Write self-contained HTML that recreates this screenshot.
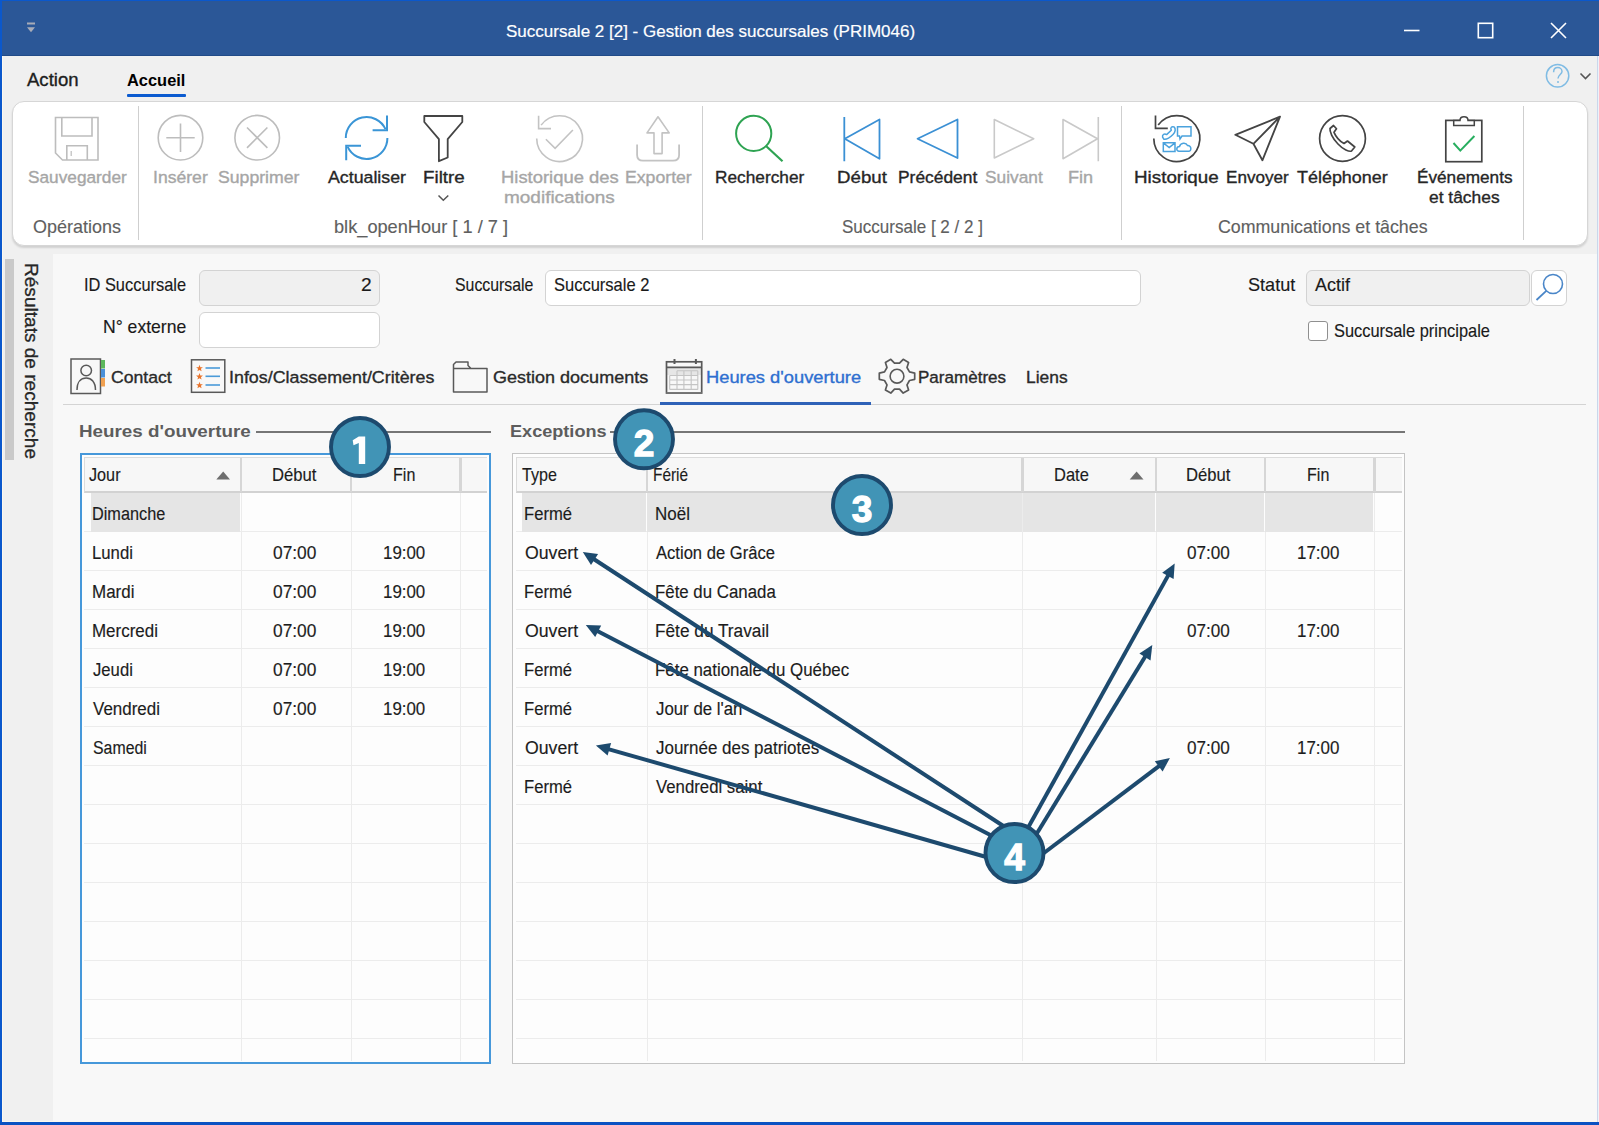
<!DOCTYPE html>
<html><head><meta charset="utf-8"><title>Gestion des succursales</title>
<style>html,body{margin:0;padding:0;width:1599px;height:1125px;overflow:hidden;position:relative;background:#f8f8f8;font-family:"Liberation Sans",sans-serif}</style>
</head><body>
<div style="position:absolute;left:0px;top:0px;width:1599px;height:1125px;z-index:0;background:#f8f8f8"></div><div style="position:absolute;left:2px;top:56px;width:1595px;height:198px;z-index:0;background:#f0f0f0"></div><div style="position:absolute;left:2px;top:254px;width:51px;height:869px;z-index:0;background:#f0f0f0"></div><div style="position:absolute;left:2px;top:56px;width:1px;height:1066px;z-index:1;background:#fbf8ef"></div><div style="position:absolute;left:2px;top:1121px;width:1595px;height:1px;z-index:1;background:#fbf8ef"></div><div style="position:absolute;left:2px;top:1px;width:1597px;height:55px;z-index:0;background:#2b5797"></div><div style="position:absolute;left:2px;top:55px;width:1597px;height:1px;z-index:0;background:#214b88"></div><div style="position:absolute;left:0px;top:0px;width:2px;height:1125px;z-index:5;background:#0b58cc"></div><div style="position:absolute;left:0px;top:0px;width:1599px;height:1px;z-index:5;background:#0b58cc"></div><div style="position:absolute;left:0px;top:1122px;width:1599px;height:3px;z-index:5;background:#0a52c2"></div><div style="position:absolute;left:1597px;top:56px;width:1px;height:1066px;z-index:5;background:#c9d7ec"></div><div style="position:absolute;left:1598px;top:56px;width:1px;height:1066px;z-index:5;background:#eef2f8"></div><div style="position:absolute;left:126.6px;top:93.6px;width:59.4px;height:3px;z-index:2;background:#0b5bd0;border-radius:1px"></div><div style="position:absolute;left:11.5px;top:101px;width:1576.5px;height:144.5px;z-index:1;background:#fff;border:1px solid #d6d6d6;border-radius:12px;box-sizing:border-box;box-shadow:0 2px 2px rgba(0,0,0,0.13)"></div><div style="position:absolute;left:138px;top:106px;width:1.3px;height:134px;z-index:2;background:#cfcfcf"></div><div style="position:absolute;left:702px;top:106px;width:1.3px;height:134px;z-index:2;background:#cfcfcf"></div><div style="position:absolute;left:1121px;top:106px;width:1.3px;height:134px;z-index:2;background:#cfcfcf"></div><div style="position:absolute;left:1523px;top:106px;width:1.3px;height:134px;z-index:2;background:#cfcfcf"></div><div style="position:absolute;left:5px;top:259px;width:9px;height:201px;z-index:2;background:#c9c9c9"></div><div style="position:absolute;left:41px;top:263px;z-index:3;transform-origin:0 0;transform:rotate(90deg) scaleX(1.072);font:17.8px/20.45px 'Liberation Sans',sans-serif;color:#262626;white-space:nowrap;-webkit-text-stroke:0.3px #262626">Résultats de recherche</div><div style="position:absolute;left:199px;top:270px;width:181px;height:36px;z-index:2;background:#f0f0f0;border:1.7px solid #d3d3d3;border-radius:6px;box-sizing:border-box"></div><div style="position:absolute;left:199px;top:312px;width:181px;height:36px;z-index:2;background:#fff;border:1.7px solid #d3d3d3;border-radius:6px;box-sizing:border-box"></div><div style="position:absolute;left:545px;top:270px;width:596px;height:36px;z-index:2;background:#fff;border:1.7px solid #d3d3d3;border-radius:6px;box-sizing:border-box"></div><div style="position:absolute;left:1306px;top:270px;width:224px;height:36px;z-index:2;background:#f0f0f0;border:1.7px solid #d3d3d3;border-radius:6px;box-sizing:border-box"></div><div style="position:absolute;left:1531px;top:270px;width:36px;height:36px;z-index:2;background:#fff;border:1.7px solid #d3d3d3;border-radius:6px;box-sizing:border-box"></div><div style="position:absolute;left:1308px;top:320.5px;width:20px;height:20px;z-index:2;background:#fff;border:1.3px solid #8f8f8f;border-radius:3px;box-sizing:border-box"></div><div style="position:absolute;left:63px;top:404px;width:1523px;height:1.3px;z-index:2;background:#d4d4d4"></div><div style="position:absolute;left:659.6px;top:402px;width:211px;height:3.2px;z-index:3;background:#2f62b8"></div><div style="position:absolute;left:256px;top:430.6px;width:235px;height:2px;z-index:2;background:#767676"></div><div style="position:absolute;left:610px;top:430.6px;width:795px;height:2px;z-index:2;background:#767676"></div><div style="position:absolute;left:80px;top:453px;width:411.2px;height:611px;z-index:2;background:#fdfdfd;border:2px solid #4698da;box-sizing:border-box"></div><div style="position:absolute;left:84px;top:457px;width:403.2px;height:36px;z-index:3;background:#f7f7f7;border-top:1px solid #dcdcdc;border-left:1px solid #dcdcdc;border-bottom:2px solid #d2d2d2;box-sizing:border-box"></div><div style="position:absolute;left:239.7px;top:458px;width:2.5px;height:34px;z-index:4;background:#d6d6d6"></div><div style="position:absolute;left:240.7px;top:493px;width:1px;height:568px;z-index:3;background:#ececec"></div><div style="position:absolute;left:349.5px;top:458px;width:2.5px;height:34px;z-index:4;background:#d6d6d6"></div><div style="position:absolute;left:350.5px;top:493px;width:1px;height:568px;z-index:3;background:#ececec"></div><div style="position:absolute;left:459.4px;top:458px;width:2.5px;height:34px;z-index:4;background:#d6d6d6"></div><div style="position:absolute;left:460.4px;top:493px;width:1px;height:568px;z-index:3;background:#ececec"></div><div style="position:absolute;left:84px;top:530.8px;width:403.2px;height:1.5px;z-index:3;background:#ececec"></div><div style="position:absolute;left:84px;top:569.8px;width:403.2px;height:1.5px;z-index:3;background:#ececec"></div><div style="position:absolute;left:84px;top:608.8px;width:403.2px;height:1.5px;z-index:3;background:#ececec"></div><div style="position:absolute;left:84px;top:647.8px;width:403.2px;height:1.5px;z-index:3;background:#ececec"></div><div style="position:absolute;left:84px;top:686.8px;width:403.2px;height:1.5px;z-index:3;background:#ececec"></div><div style="position:absolute;left:84px;top:725.8px;width:403.2px;height:1.5px;z-index:3;background:#ececec"></div><div style="position:absolute;left:84px;top:764.8px;width:403.2px;height:1.5px;z-index:3;background:#ececec"></div><div style="position:absolute;left:84px;top:803.8px;width:403.2px;height:1.5px;z-index:3;background:#ececec"></div><div style="position:absolute;left:84px;top:842.8px;width:403.2px;height:1.5px;z-index:3;background:#ececec"></div><div style="position:absolute;left:84px;top:881.8px;width:403.2px;height:1.5px;z-index:3;background:#ececec"></div><div style="position:absolute;left:84px;top:920.8px;width:403.2px;height:1.5px;z-index:3;background:#ececec"></div><div style="position:absolute;left:84px;top:959.8px;width:403.2px;height:1.5px;z-index:3;background:#ececec"></div><div style="position:absolute;left:84px;top:998.8px;width:403.2px;height:1.5px;z-index:3;background:#ececec"></div><div style="position:absolute;left:84px;top:1037.8px;width:403.2px;height:1.5px;z-index:3;background:#ececec"></div><div style="position:absolute;left:91.3px;top:493px;width:148.89999999999998px;height:38.5px;z-index:3;background:#e5e5e5"></div><div style="position:absolute;left:511.5px;top:453px;width:893.5px;height:611px;z-index:2;background:#fdfdfd;border:1.5px solid #c4c4c4;box-sizing:border-box"></div><div style="position:absolute;left:515.5px;top:457px;width:886.5px;height:36px;z-index:3;background:#f7f7f7;border-top:1px solid #dcdcdc;border-left:1px solid #dcdcdc;border-bottom:2px solid #d2d2d2;box-sizing:border-box"></div><div style="position:absolute;left:645.8px;top:458px;width:2.5px;height:34px;z-index:4;background:#d6d6d6"></div><div style="position:absolute;left:646.8px;top:493px;width:1px;height:568px;z-index:3;background:#ececec"></div><div style="position:absolute;left:1021.3px;top:458px;width:2.5px;height:34px;z-index:4;background:#d6d6d6"></div><div style="position:absolute;left:1022.3px;top:493px;width:1px;height:568px;z-index:3;background:#ececec"></div><div style="position:absolute;left:1154.5px;top:458px;width:2.5px;height:34px;z-index:4;background:#d6d6d6"></div><div style="position:absolute;left:1155.5px;top:493px;width:1px;height:568px;z-index:3;background:#ececec"></div><div style="position:absolute;left:1263.6px;top:458px;width:2.5px;height:34px;z-index:4;background:#d6d6d6"></div><div style="position:absolute;left:1264.6px;top:493px;width:1px;height:568px;z-index:3;background:#ececec"></div><div style="position:absolute;left:1373px;top:458px;width:2.5px;height:34px;z-index:4;background:#d6d6d6"></div><div style="position:absolute;left:1374px;top:493px;width:1px;height:568px;z-index:3;background:#ececec"></div><div style="position:absolute;left:515.5px;top:530.8px;width:886.5px;height:1.5px;z-index:3;background:#ececec"></div><div style="position:absolute;left:515.5px;top:569.8px;width:886.5px;height:1.5px;z-index:3;background:#ececec"></div><div style="position:absolute;left:515.5px;top:608.8px;width:886.5px;height:1.5px;z-index:3;background:#ececec"></div><div style="position:absolute;left:515.5px;top:647.8px;width:886.5px;height:1.5px;z-index:3;background:#ececec"></div><div style="position:absolute;left:515.5px;top:686.8px;width:886.5px;height:1.5px;z-index:3;background:#ececec"></div><div style="position:absolute;left:515.5px;top:725.8px;width:886.5px;height:1.5px;z-index:3;background:#ececec"></div><div style="position:absolute;left:515.5px;top:764.8px;width:886.5px;height:1.5px;z-index:3;background:#ececec"></div><div style="position:absolute;left:515.5px;top:803.8px;width:886.5px;height:1.5px;z-index:3;background:#ececec"></div><div style="position:absolute;left:515.5px;top:842.8px;width:886.5px;height:1.5px;z-index:3;background:#ececec"></div><div style="position:absolute;left:515.5px;top:881.8px;width:886.5px;height:1.5px;z-index:3;background:#ececec"></div><div style="position:absolute;left:515.5px;top:920.8px;width:886.5px;height:1.5px;z-index:3;background:#ececec"></div><div style="position:absolute;left:515.5px;top:959.8px;width:886.5px;height:1.5px;z-index:3;background:#ececec"></div><div style="position:absolute;left:515.5px;top:998.8px;width:886.5px;height:1.5px;z-index:3;background:#ececec"></div><div style="position:absolute;left:515.5px;top:1037.8px;width:886.5px;height:1.5px;z-index:3;background:#ececec"></div><div style="position:absolute;left:522px;top:493px;width:124.29999999999995px;height:38.5px;z-index:3;background:#e5e5e5"></div><div style="position:absolute;left:647.3px;top:493px;width:374.5px;height:38.5px;z-index:3;background:#e5e5e5"></div><div style="position:absolute;left:1022.8px;top:493px;width:132.20000000000005px;height:38.5px;z-index:3;background:#e5e5e5"></div><div style="position:absolute;left:1156px;top:493px;width:108.09999999999991px;height:38.5px;z-index:3;background:#e5e5e5"></div><div style="position:absolute;left:1265.1px;top:493px;width:108.40000000000009px;height:38.5px;z-index:3;background:#e5e5e5"></div>
<svg style="position:absolute;left:0;top:0;z-index:4" width="1599" height="1125" viewBox="0 0 1599 1125"><rect x="27" y="22.5" width="8" height="2" fill="#a8acb8"/><polygon points="27,27.3 35,27.3 31,32.3" fill="#a8acb8"/><line x1="1404" y1="30.5" x2="1419.5" y2="30.5" stroke="#fff" stroke-width="1.6"/><rect x="1478.3" y="23.3" width="14.4" height="14.4" fill="none" stroke="#fff" stroke-width="1.6"/><path d="M1551,23 L1566,38 M1566,23 L1551,38" stroke="#fff" stroke-width="1.6"/><circle cx="1557.6" cy="75.8" r="11.2" fill="none" stroke="#80bce4" stroke-width="1.5"/><path d="M1553.6,72.3 C1553.6,68.8 1556,67.6 1557.8,67.6 C1560.2,67.6 1562,69.3 1562,71.6 C1562,74.3 1558,75 1558,78.6" fill="none" stroke="#80bce4" stroke-width="1.5"/><circle cx="1558" cy="82" r="1" fill="#80bce4"/><path d="M1580.5,73.5 L1585.5,78.5 L1590.5,73.5" fill="none" stroke="#555" stroke-width="1.6"/><path d="M55.5,117.5 H98 V160 H62.5 L55.5,153 Z" fill="none" stroke="#bdbdbd" stroke-width="1.6"/><path d="M61.8,117.5 V136 H92 V117.5" fill="none" stroke="#bdbdbd" stroke-width="1.6"/><path d="M66.8,160 V145.7 H87.3 V160" fill="none" stroke="#bdbdbd" stroke-width="1.6"/><line x1="71.2" y1="151" x2="71.2" y2="156" stroke="#bdbdbd" stroke-width="1.2"/><circle cx="180.5" cy="137.7" r="22.3" fill="none" stroke="#bdbdbd" stroke-width="1.6"/><path d="M166.3,137.7 H194.7 M180.5,123.5 V151.9" stroke="#bdbdbd" stroke-width="1.6"/><circle cx="257.2" cy="137.7" r="22.3" fill="none" stroke="#bdbdbd" stroke-width="1.6"/><path d="M247,127.5 L267.4,147.9 M267.4,127.5 L247,147.9" stroke="#bdbdbd" stroke-width="1.6"/><path d="M345.8,138.0 A20.8,20.8 0 0 1 385.5,129.2" fill="none" stroke="#3a95d6" stroke-width="2"/><path d="M387,115.5 V130.3 H372.6" fill="none" stroke="#3a95d6" stroke-width="2"/><path d="M387.4,138.0 A20.8,20.8 0 0 1 347.7,146.8" fill="none" stroke="#3a95d6" stroke-width="2"/><path d="M346.2,160.3 V145.8 H361" fill="none" stroke="#3a95d6" stroke-width="2"/><path d="M424.3,116 H462.3 V122 L447.7,139.2 V157.5 L438.9,161.2 V139.2 L424.3,122 Z" fill="none" stroke="#444" stroke-width="1.8" stroke-linejoin="round"/><path d="M438.5,195.5 L443.3,200.3 L448.3,195.5" fill="none" stroke="#555" stroke-width="1.5"/><path d="M541.1,125.1 A22.9,22.9 0 1 1 536.7,138.6" fill="none" stroke="#c3c3c3" stroke-width="1.6"/><path d="M538.6,115.7 V128.6 H551" fill="none" stroke="#c3c3c3" stroke-width="1.6"/><path d="M545.9,139.3 L555.1,148.4 L572.9,130" fill="none" stroke="#c3c3c3" stroke-width="1.6"/><path d="M658,116.8 L669.2,132.9 H662.1 V153.6 H654 V132.9 H647 Z" fill="none" stroke="#c3c3c3" stroke-width="1.6" stroke-linejoin="round"/><path d="M637.1,144.4 V155 Q637.1,160.7 643,160.7 H673 Q679.1,160.7 679.1,155 V144.4" fill="none" stroke="#c3c3c3" stroke-width="1.8"/><circle cx="753.7" cy="133.4" r="17.6" fill="none" stroke="#2ea352" stroke-width="2"/><line x1="766" y1="146" x2="782.5" y2="161.3" stroke="#2ea352" stroke-width="2.2"/><path d="M844.3,117 V161.3 M879.5,119.5 L844.8,138.7 L879.5,158.7 Z" fill="none" stroke="#3b90d4" stroke-width="1.8" stroke-linejoin="round"/><path d="M957.5,119.5 L917.5,138.7 L957.5,158 Z" fill="none" stroke="#3b90d4" stroke-width="1.8" stroke-linejoin="round"/><path d="M994.3,119.5 L1033.7,138.7 L994.3,158 Z" fill="none" stroke="#c9c9c9" stroke-width="1.6" stroke-linejoin="round"/><path d="M1098.3,117 V161.3 M1063,119.5 L1097.5,138.7 L1063,158.7 Z" fill="none" stroke="#c9c9c9" stroke-width="1.6" stroke-linejoin="round"/><path d="M1158.2,125.0 A23,23 0 1 1 1153.8,138.5" fill="none" stroke="#444" stroke-width="1.7"/><path d="M1155.5,115.6 V128.4 H1167.8" fill="none" stroke="#444" stroke-width="1.7"/><path d="M1162.6,137.2 C1162,134.5 1164.5,133.2 1166.6,134.6 L1171.3,130.2 C1170,128 1171.5,126 1174,126.9 C1176,128.5 1175.5,132 1173,134.5 C1170,137.5 1166.5,139.8 1163.8,139.2 Z" fill="none" stroke="#4aa2dd" stroke-width="1.5" stroke-linejoin="round"/><path d="M1177.5,126.8 H1191 V136 H1182 L1180,139 L1179.5,136 H1177.5 Z" fill="none" stroke="#4aa2dd" stroke-width="1.5"/><path d="M1163.3,142.8 H1175 V151.5 H1163.3 Z M1163.3,142.8 L1169.2,147.5 L1175,142.8" fill="none" stroke="#4aa2dd" stroke-width="1.5"/><path d="M1179,151.3 C1176,151.3 1176,146.5 1179.5,146.5 C1180.5,142.5 1186,142 1187.5,145.5 C1191.5,145 1192,151.3 1188.5,151.3 Z" fill="none" stroke="#4aa2dd" stroke-width="1.5"/><path d="M1280,116.7 L1235.3,134.8 L1253.4,143.8 L1262.4,160.3 Z M1253.4,143.8 L1280,116.7" fill="none" stroke="#444" stroke-width="1.8" stroke-linejoin="round"/><circle cx="1342.5" cy="138.5" r="22.9" fill="none" stroke="#444" stroke-width="1.7"/><path d="M1333.5,125.5 L1336.5,128.8 L1334,132.3 C1336,137 1339.5,141 1344,143.5 L1347.5,141 L1354.8,147 L1351.5,151 C1349.5,152 1343,149.5 1338,144 C1332.5,138.5 1329.5,131.5 1330,128.5 Z" fill="none" stroke="#444" stroke-width="1.7" stroke-linejoin="round"/><rect x="1445.8" y="120.4" width="36" height="41.3" fill="none" stroke="#444" stroke-width="1.7"/><path d="M1453.7,120.4 V125.6 H1474.3 V120.4 H1468 C1468,115.5 1460,115.5 1460,120.4 Z" fill="#fff" stroke="#444" stroke-width="1.5"/><path d="M1453.5,143 L1460.3,150.6 L1474.4,136" fill="none" stroke="#27ae5f" stroke-width="2"/><circle cx="1553" cy="284" r="9.5" fill="none" stroke="#4a86c8" stroke-width="1.6"/><line x1="1546.3" y1="290.8" x2="1536.5" y2="300" stroke="#4a86c8" stroke-width="1.8"/><rect x="71" y="359" width="29.5" height="34.5" fill="none" stroke="#595959" stroke-width="1.5"/><rect x="101" y="360" width="4" height="8.5" fill="#5cb85c"/><rect x="101" y="369" width="4" height="8.5" fill="#4a90d9"/><rect x="101" y="378" width="4" height="8.5" fill="#f0a050"/><circle cx="86.2" cy="370.5" r="5.3" fill="none" stroke="#595959" stroke-width="1.5"/><path d="M77,390 C77,382 81,378 86.2,378 C91.4,378 95.5,382 95.5,390" fill="none" stroke="#595959" stroke-width="1.5"/><rect x="191.5" y="359.8" width="33.3" height="32.5" fill="none" stroke="#595959" stroke-width="1.5"/><polygon points="199.50,364.80 200.38,367.19 202.92,367.29 200.93,368.86 201.62,371.31 199.50,369.90 197.38,371.31 198.07,368.86 196.08,367.29 198.62,367.19" fill="#e8742c"/><line x1="205.5" y1="368" x2="220" y2="368" stroke="#4a9ad8" stroke-width="1.6"/><polygon points="199.50,373.10 200.38,375.49 202.92,375.59 200.93,377.16 201.62,379.61 199.50,378.20 197.38,379.61 198.07,377.16 196.08,375.59 198.62,375.49" fill="#e8742c"/><line x1="205.5" y1="376.3" x2="220" y2="376.3" stroke="#4a9ad8" stroke-width="1.6"/><polygon points="199.50,381.80 200.38,384.19 202.92,384.29 200.93,385.86 201.62,388.31 199.50,386.90 197.38,388.31 198.07,385.86 196.08,384.29 198.62,384.19" fill="#e8742c"/><line x1="205.5" y1="385" x2="220" y2="385" stroke="#4a9ad8" stroke-width="1.6"/><path d="M453.5,366 V392 H487 V368.5 H471 L468,365.5 V362 H456 L453.5,364.5 Z M453.5,368.5 H487" fill="none" stroke="#595959" stroke-width="1.5" stroke-linejoin="round"/><rect x="666.8" y="367" width="34.6" height="8" fill="#e6e6e6"/><rect x="666.5" y="361.8" width="35.2" height="31.2" fill="none" stroke="#595959" stroke-width="1.7"/><line x1="666.5" y1="367.4" x2="701.7" y2="367.4" stroke="#595959" stroke-width="1.7"/><line x1="666.5" y1="392.6" x2="701.7" y2="392.6" stroke="#777" stroke-width="1.2"/><path d="M674.5,359 V364 M695.9,359 V364" stroke="#595959" stroke-width="2"/><path d="M677,370.7 H697.8 M669.7,375.5 H697.8 M669.7,380 H697.8 M669.7,384.6 H697.8 M669.7,389.4 H697.8 M669.7,375.5 V389.4 M677,370.7 V389.4 M683.9,370.7 V389.4 M691.2,370.7 V389.4 M697.8,370.7 V389.4" fill="none" stroke="#c4c4c4" stroke-width="1.1"/><path d="M909.5,371.9 L914.7,373.1 L914.7,379.3 L909.5,380.5 L907.0,384.9 L908.6,390.0 L903.2,393.1 L899.5,389.2 L894.5,389.2 L890.8,393.1 L885.4,390.0 L887.0,384.9 L884.5,380.5 L879.3,379.3 L879.3,373.1 L884.5,371.9 L887.0,367.5 L885.4,362.4 L890.8,359.3 L894.5,363.2 L899.5,363.2 L903.2,359.3 L908.6,362.4 L907.0,367.5 Z" fill="none" stroke="#595959" stroke-width="1.7" stroke-linejoin="round"/><circle cx="897" cy="376.2" r="6.9" fill="none" stroke="#595959" stroke-width="1.6"/><polygon points="216.3,479.4 230,479.4 223.2,471.5" fill="#6e6e6e"/><polygon points="1129.7,479.4 1143.5,479.4 1136.6,471.5" fill="#6e6e6e"/></svg>
<div style="position:absolute;left:506.00px;top:21.62px;z-index:6;font:normal 17px/19.53px 'Liberation Sans',sans-serif;color:#ffffff;white-space:pre;-webkit-text-stroke:0.2px #ffffff;">Succursale 2 [2] - Gestion des succursales (PRIM046)</div><div style="position:absolute;left:27.00px;top:70.19px;z-index:6;font:normal 17.8px/20.45px 'Liberation Sans',sans-serif;color:#1e1e1e;white-space:pre;-webkit-text-stroke:0.35px #1e1e1e;transform:scaleX(1.0426);transform-origin:0 0;">Action</div><div style="position:absolute;left:126.60px;top:70.45px;z-index:6;font:bold 17.4px/19.99px 'Liberation Sans',sans-serif;color:#000;white-space:pre;-webkit-text-stroke:0px #000;transform:scaleX(0.9438);transform-origin:0 0;">Accueil</div><div style="position:absolute;left:28.00px;top:168.33px;z-index:6;font:normal 17.2px/19.76px 'Liberation Sans',sans-serif;color:#a6a6a6;white-space:pre;-webkit-text-stroke:0.35px #a6a6a6;transform:scaleX(1.0031);transform-origin:0 0;">Sauvegarder</div><div style="position:absolute;left:152.98px;top:168.33px;z-index:6;font:normal 17.2px/19.76px 'Liberation Sans',sans-serif;color:#a6a6a6;white-space:pre;-webkit-text-stroke:0.35px #a6a6a6;transform:scaleX(1.0233);transform-origin:0 0;">Insérer</div><div style="position:absolute;left:218.30px;top:168.33px;z-index:6;font:normal 17.2px/19.76px 'Liberation Sans',sans-serif;color:#a6a6a6;white-space:pre;-webkit-text-stroke:0.35px #a6a6a6;transform:scaleX(1.0269);transform-origin:0 0;">Supprimer</div><div style="position:absolute;left:328.30px;top:168.33px;z-index:6;font:normal 17.2px/19.76px 'Liberation Sans',sans-serif;color:#262626;white-space:pre;-webkit-text-stroke:0.35px #262626;transform:scaleX(1.0325);transform-origin:0 0;">Actualiser</div><div style="position:absolute;left:422.91px;top:168.33px;z-index:6;font:normal 17.2px/19.76px 'Liberation Sans',sans-serif;color:#262626;white-space:pre;-webkit-text-stroke:0.35px #262626;transform:scaleX(1.0919);transform-origin:0 0;">Filtre</div><div style="position:absolute;left:500.93px;top:168.33px;z-index:6;font:normal 17.2px/19.76px 'Liberation Sans',sans-serif;color:#a6a6a6;white-space:pre;-webkit-text-stroke:0.35px #a6a6a6;transform:scaleX(1.0714);transform-origin:0 0;">Historique des</div><div style="position:absolute;left:624.97px;top:168.33px;z-index:6;font:normal 17.2px/19.76px 'Liberation Sans',sans-serif;color:#a6a6a6;white-space:pre;-webkit-text-stroke:0.35px #a6a6a6;transform:scaleX(1.0275);transform-origin:0 0;">Exporter</div><div style="position:absolute;left:715.00px;top:168.33px;z-index:6;font:normal 17.2px/19.76px 'Liberation Sans',sans-serif;color:#262626;white-space:pre;-webkit-text-stroke:0.35px #262626;transform:scaleX(1.0043);transform-origin:0 0;">Rechercher</div><div style="position:absolute;left:836.91px;top:168.33px;z-index:6;font:normal 17.2px/19.76px 'Liberation Sans',sans-serif;color:#262626;white-space:pre;-webkit-text-stroke:0.35px #262626;transform:scaleX(1.0867);transform-origin:0 0;">Début</div><div style="position:absolute;left:897.99px;top:168.33px;z-index:6;font:normal 17.2px/19.76px 'Liberation Sans',sans-serif;color:#262626;white-space:pre;-webkit-text-stroke:0.35px #262626;transform:scaleX(1.0119);transform-origin:0 0;">Précédent</div><div style="position:absolute;left:985.00px;top:168.33px;z-index:6;font:normal 17.2px/19.76px 'Liberation Sans',sans-serif;color:#a6a6a6;white-space:pre;-webkit-text-stroke:0.35px #a6a6a6;transform:scaleX(1.0078);transform-origin:0 0;">Suivant</div><div style="position:absolute;left:1068.45px;top:168.33px;z-index:6;font:normal 17.2px/19.76px 'Liberation Sans',sans-serif;color:#a6a6a6;white-space:pre;-webkit-text-stroke:0.35px #a6a6a6;transform:scaleX(1.0530);transform-origin:0 0;">Fin</div><div style="position:absolute;left:1133.91px;top:168.33px;z-index:6;font:normal 17.2px/19.76px 'Liberation Sans',sans-serif;color:#262626;white-space:pre;-webkit-text-stroke:0.35px #262626;transform:scaleX(1.0947);transform-origin:0 0;">Historique</div><div style="position:absolute;left:1226.01px;top:168.33px;z-index:6;font:normal 17.2px/19.76px 'Liberation Sans',sans-serif;color:#262626;white-space:pre;-webkit-text-stroke:0.35px #262626;transform:scaleX(0.9947);transform-origin:0 0;">Envoyer</div><div style="position:absolute;left:1297.00px;top:168.33px;z-index:6;font:normal 17.2px/19.76px 'Liberation Sans',sans-serif;color:#262626;white-space:pre;-webkit-text-stroke:0.35px #262626;transform:scaleX(1.0432);transform-origin:0 0;">Téléphoner</div><div style="position:absolute;left:1417.00px;top:168.33px;z-index:6;font:normal 17.2px/19.76px 'Liberation Sans',sans-serif;color:#262626;white-space:pre;-webkit-text-stroke:0.35px #262626;">Événements</div><div style="position:absolute;left:503.90px;top:188.33px;z-index:6;font:normal 17.2px/19.76px 'Liberation Sans',sans-serif;color:#a6a6a6;white-space:pre;-webkit-text-stroke:0.35px #a6a6a6;transform:scaleX(1.1042);transform-origin:0 0;">modifications</div><div style="position:absolute;left:1429.00px;top:188.33px;z-index:6;font:normal 17.2px/19.76px 'Liberation Sans',sans-serif;color:#262626;white-space:pre;-webkit-text-stroke:0.35px #262626;transform:scaleX(1.0122);transform-origin:0 0;">et tâches</div><div style="position:absolute;left:33.00px;top:216.69px;z-index:6;font:normal 17.8px/20.45px 'Liberation Sans',sans-serif;color:#5f5f5f;white-space:pre;-webkit-text-stroke:0.15px #5f5f5f;transform:scaleX(1.0105);transform-origin:0 0;">Opérations</div><div style="position:absolute;left:333.98px;top:216.69px;z-index:6;font:normal 17.8px/20.45px 'Liberation Sans',sans-serif;color:#5f5f5f;white-space:pre;-webkit-text-stroke:0.15px #5f5f5f;transform:scaleX(1.0233);transform-origin:0 0;">blk_openHour [ 1 / 7 ]</div><div style="position:absolute;left:841.75px;top:216.69px;z-index:6;font:normal 17.8px/20.45px 'Liberation Sans',sans-serif;color:#5f5f5f;white-space:pre;-webkit-text-stroke:0.15px #5f5f5f;transform:scaleX(0.9568);transform-origin:0 0;">Succursale [ 2 / 2 ]</div><div style="position:absolute;left:1218.00px;top:216.69px;z-index:6;font:normal 17.8px/20.45px 'Liberation Sans',sans-serif;color:#5f5f5f;white-space:pre;-webkit-text-stroke:0.15px #5f5f5f;">Communications et tâches</div><div style="position:absolute;left:84.48px;top:274.59px;z-index:6;font:normal 17.8px/20.45px 'Liberation Sans',sans-serif;color:#1a1a1a;white-space:pre;-webkit-text-stroke:0.15px #1a1a1a;transform:scaleX(0.9217);transform-origin:0 0;">ID Succursale</div><div style="position:absolute;left:103.21px;top:316.59px;z-index:6;font:normal 17.8px/20.45px 'Liberation Sans',sans-serif;color:#1a1a1a;white-space:pre;-webkit-text-stroke:0.15px #1a1a1a;transform:scaleX(0.9891);transform-origin:0 0;">N° externe</div><div style="position:absolute;left:361.00px;top:274.59px;z-index:6;font:normal 17.8px/20.45px 'Liberation Sans',sans-serif;color:#1a1a1a;white-space:pre;-webkit-text-stroke:0.15px #1a1a1a;transform:scaleX(1.0778);transform-origin:0 0;">2</div><div style="position:absolute;left:454.50px;top:274.59px;z-index:6;font:normal 17.8px/20.45px 'Liberation Sans',sans-serif;color:#1a1a1a;white-space:pre;-webkit-text-stroke:0.15px #1a1a1a;transform:scaleX(0.8913);transform-origin:0 0;">Succursale</div><div style="position:absolute;left:553.50px;top:275.39px;z-index:6;font:normal 17.8px/20.45px 'Liberation Sans',sans-serif;color:#1a1a1a;white-space:pre;-webkit-text-stroke:0.15px #1a1a1a;transform:scaleX(0.9274);transform-origin:0 0;">Succursale 2</div><div style="position:absolute;left:1247.60px;top:274.59px;z-index:6;font:normal 17.8px/20.45px 'Liberation Sans',sans-serif;color:#1a1a1a;white-space:pre;-webkit-text-stroke:0.15px #1a1a1a;transform:scaleX(1.0189);transform-origin:0 0;">Statut</div><div style="position:absolute;left:1315.00px;top:275.39px;z-index:6;font:normal 17.8px/20.45px 'Liberation Sans',sans-serif;color:#1a1a1a;white-space:pre;-webkit-text-stroke:0.15px #1a1a1a;transform:scaleX(1.0104);transform-origin:0 0;">Actif</div><div style="position:absolute;left:1333.50px;top:320.89px;z-index:6;font:normal 17.8px/20.45px 'Liberation Sans',sans-serif;color:#1a1a1a;white-space:pre;-webkit-text-stroke:0.15px #1a1a1a;transform:scaleX(0.9224);transform-origin:0 0;">Succursale principale</div><div style="position:absolute;left:110.75px;top:368.12px;z-index:6;font:normal 17.1px/19.65px 'Liberation Sans',sans-serif;color:#2a2a2a;white-space:pre;-webkit-text-stroke:0.35px #2a2a2a;transform:scaleX(1.0311);transform-origin:0 0;">Contact</div><div style="position:absolute;left:228.96px;top:368.12px;z-index:6;font:normal 17.1px/19.65px 'Liberation Sans',sans-serif;color:#2a2a2a;white-space:pre;-webkit-text-stroke:0.35px #2a2a2a;transform:scaleX(1.0443);transform-origin:0 0;">Infos/Classement/Critères</div><div style="position:absolute;left:493.00px;top:368.12px;z-index:6;font:normal 17.1px/19.65px 'Liberation Sans',sans-serif;color:#2a2a2a;white-space:pre;-webkit-text-stroke:0.35px #2a2a2a;transform:scaleX(1.0536);transform-origin:0 0;">Gestion documents</div><div style="position:absolute;left:706.43px;top:368.12px;z-index:6;font:normal 17.1px/19.65px 'Liberation Sans',sans-serif;color:#2e6fd0;white-space:pre;-webkit-text-stroke:0.35px #2e6fd0;transform:scaleX(1.0709);transform-origin:0 0;">Heures d&#x27;ouverture</div><div style="position:absolute;left:918.00px;top:368.12px;z-index:6;font:normal 17.1px/19.65px 'Liberation Sans',sans-serif;color:#2a2a2a;white-space:pre;-webkit-text-stroke:0.35px #2a2a2a;transform:scaleX(0.9965);transform-origin:0 0;">Paramètres</div><div style="position:absolute;left:1025.98px;top:368.12px;z-index:6;font:normal 17.1px/19.65px 'Liberation Sans',sans-serif;color:#2a2a2a;white-space:pre;-webkit-text-stroke:0.35px #2a2a2a;transform:scaleX(1.0173);transform-origin:0 0;">Liens</div><div style="position:absolute;left:79.16px;top:421.84px;z-index:6;font:bold 17.3px/19.88px 'Liberation Sans',sans-serif;color:#5d5d5d;white-space:pre;-webkit-text-stroke:0px #5d5d5d;transform:scaleX(1.0881);transform-origin:0 0;">Heures d&#x27;ouverture</div><div style="position:absolute;left:510.45px;top:421.84px;z-index:6;font:bold 17.3px/19.88px 'Liberation Sans',sans-serif;color:#5d5d5d;white-space:pre;-webkit-text-stroke:0px #5d5d5d;transform:scaleX(1.0476);transform-origin:0 0;">Exceptions</div><div style="position:absolute;left:89.40px;top:465.39px;z-index:6;font:normal 17.8px/20.45px 'Liberation Sans',sans-serif;color:#1c1c1c;white-space:pre;-webkit-text-stroke:0.15px #1c1c1c;transform:scaleX(0.9115);transform-origin:0 0;">Jour</div><div style="position:absolute;left:271.56px;top:465.39px;z-index:6;font:normal 17.8px/20.45px 'Liberation Sans',sans-serif;color:#1c1c1c;white-space:pre;-webkit-text-stroke:0.15px #1c1c1c;transform:scaleX(0.9353);transform-origin:0 0;">Début</div><div style="position:absolute;left:393.10px;top:465.39px;z-index:6;font:normal 17.8px/20.45px 'Liberation Sans',sans-serif;color:#1c1c1c;white-space:pre;-webkit-text-stroke:0.15px #1c1c1c;transform:scaleX(0.9030);transform-origin:0 0;">Fin</div><div style="position:absolute;left:522.00px;top:465.39px;z-index:6;font:normal 17.8px/20.45px 'Liberation Sans',sans-serif;color:#1c1c1c;white-space:pre;-webkit-text-stroke:0.15px #1c1c1c;transform:scaleX(0.9053);transform-origin:0 0;">Type</div><div style="position:absolute;left:652.89px;top:465.39px;z-index:6;font:normal 17.8px/20.45px 'Liberation Sans',sans-serif;color:#1c1c1c;white-space:pre;-webkit-text-stroke:0.15px #1c1c1c;transform:scaleX(0.8644);transform-origin:0 0;">Férié</div><div style="position:absolute;left:1054.07px;top:465.39px;z-index:6;font:normal 17.8px/20.45px 'Liberation Sans',sans-serif;color:#1c1c1c;white-space:pre;-webkit-text-stroke:0.15px #1c1c1c;transform:scaleX(0.9272);transform-origin:0 0;">Date</div><div style="position:absolute;left:1185.56px;top:465.39px;z-index:6;font:normal 17.8px/20.45px 'Liberation Sans',sans-serif;color:#1c1c1c;white-space:pre;-webkit-text-stroke:0.15px #1c1c1c;transform:scaleX(0.9353);transform-origin:0 0;">Début</div><div style="position:absolute;left:1307.10px;top:465.39px;z-index:6;font:normal 17.8px/20.45px 'Liberation Sans',sans-serif;color:#1c1c1c;white-space:pre;-webkit-text-stroke:0.15px #1c1c1c;transform:scaleX(0.9030);transform-origin:0 0;">Fin</div><div style="position:absolute;left:92.28px;top:503.67px;z-index:6;font:normal 17.6px/20.22px 'Liberation Sans',sans-serif;color:#1c1c1c;white-space:pre;-webkit-text-stroke:0.15px #1c1c1c;transform:scaleX(0.9248);transform-origin:0 0;">Dimanche</div><div style="position:absolute;left:92.25px;top:542.67px;z-index:6;font:normal 17.6px/20.22px 'Liberation Sans',sans-serif;color:#1c1c1c;white-space:pre;-webkit-text-stroke:0.15px #1c1c1c;transform:scaleX(0.9504);transform-origin:0 0;">Lundi</div><div style="position:absolute;left:272.90px;top:542.67px;z-index:6;font:normal 17.6px/20.22px 'Liberation Sans',sans-serif;color:#1c1c1c;white-space:pre;-webkit-text-stroke:0.15px #1c1c1c;transform:scaleX(0.9855);transform-origin:0 0;">07:00</div><div style="position:absolute;left:383.44px;top:542.67px;z-index:6;font:normal 17.6px/20.22px 'Liberation Sans',sans-serif;color:#1c1c1c;white-space:pre;-webkit-text-stroke:0.15px #1c1c1c;transform:scaleX(0.9597);transform-origin:0 0;">19:00</div><div style="position:absolute;left:92.24px;top:581.67px;z-index:6;font:normal 17.6px/20.22px 'Liberation Sans',sans-serif;color:#1c1c1c;white-space:pre;-webkit-text-stroke:0.15px #1c1c1c;transform:scaleX(0.9647);transform-origin:0 0;">Mardi</div><div style="position:absolute;left:272.90px;top:581.67px;z-index:6;font:normal 17.6px/20.22px 'Liberation Sans',sans-serif;color:#1c1c1c;white-space:pre;-webkit-text-stroke:0.15px #1c1c1c;transform:scaleX(0.9855);transform-origin:0 0;">07:00</div><div style="position:absolute;left:383.44px;top:581.67px;z-index:6;font:normal 17.6px/20.22px 'Liberation Sans',sans-serif;color:#1c1c1c;white-space:pre;-webkit-text-stroke:0.15px #1c1c1c;transform:scaleX(0.9597);transform-origin:0 0;">19:00</div><div style="position:absolute;left:92.24px;top:620.67px;z-index:6;font:normal 17.6px/20.22px 'Liberation Sans',sans-serif;color:#1c1c1c;white-space:pre;-webkit-text-stroke:0.15px #1c1c1c;transform:scaleX(0.9636);transform-origin:0 0;">Mercredi</div><div style="position:absolute;left:272.90px;top:620.67px;z-index:6;font:normal 17.6px/20.22px 'Liberation Sans',sans-serif;color:#1c1c1c;white-space:pre;-webkit-text-stroke:0.15px #1c1c1c;transform:scaleX(0.9855);transform-origin:0 0;">07:00</div><div style="position:absolute;left:383.44px;top:620.67px;z-index:6;font:normal 17.6px/20.22px 'Liberation Sans',sans-serif;color:#1c1c1c;white-space:pre;-webkit-text-stroke:0.15px #1c1c1c;transform:scaleX(0.9597);transform-origin:0 0;">19:00</div><div style="position:absolute;left:93.20px;top:659.67px;z-index:6;font:normal 17.6px/20.22px 'Liberation Sans',sans-serif;color:#1c1c1c;white-space:pre;-webkit-text-stroke:0.15px #1c1c1c;transform:scaleX(0.9477);transform-origin:0 0;">Jeudi</div><div style="position:absolute;left:272.90px;top:659.67px;z-index:6;font:normal 17.6px/20.22px 'Liberation Sans',sans-serif;color:#1c1c1c;white-space:pre;-webkit-text-stroke:0.15px #1c1c1c;transform:scaleX(0.9855);transform-origin:0 0;">07:00</div><div style="position:absolute;left:383.44px;top:659.67px;z-index:6;font:normal 17.6px/20.22px 'Liberation Sans',sans-serif;color:#1c1c1c;white-space:pre;-webkit-text-stroke:0.15px #1c1c1c;transform:scaleX(0.9597);transform-origin:0 0;">19:00</div><div style="position:absolute;left:93.20px;top:698.67px;z-index:6;font:normal 17.6px/20.22px 'Liberation Sans',sans-serif;color:#1c1c1c;white-space:pre;-webkit-text-stroke:0.15px #1c1c1c;transform:scaleX(0.9643);transform-origin:0 0;">Vendredi</div><div style="position:absolute;left:272.90px;top:698.67px;z-index:6;font:normal 17.6px/20.22px 'Liberation Sans',sans-serif;color:#1c1c1c;white-space:pre;-webkit-text-stroke:0.15px #1c1c1c;transform:scaleX(0.9855);transform-origin:0 0;">07:00</div><div style="position:absolute;left:383.44px;top:698.67px;z-index:6;font:normal 17.6px/20.22px 'Liberation Sans',sans-serif;color:#1c1c1c;white-space:pre;-webkit-text-stroke:0.15px #1c1c1c;transform:scaleX(0.9597);transform-origin:0 0;">19:00</div><div style="position:absolute;left:93.20px;top:737.67px;z-index:6;font:normal 17.6px/20.22px 'Liberation Sans',sans-serif;color:#1c1c1c;white-space:pre;-webkit-text-stroke:0.15px #1c1c1c;transform:scaleX(0.9022);transform-origin:0 0;">Samedi</div><div style="position:absolute;left:523.56px;top:503.67px;z-index:6;font:normal 17.6px/20.22px 'Liberation Sans',sans-serif;color:#1c1c1c;white-space:pre;-webkit-text-stroke:0.15px #1c1c1c;transform:scaleX(0.9440);transform-origin:0 0;">Fermé</div><div style="position:absolute;left:654.63px;top:503.67px;z-index:6;font:normal 17.6px/20.22px 'Liberation Sans',sans-serif;color:#1c1c1c;white-space:pre;-webkit-text-stroke:0.15px #1c1c1c;transform:scaleX(0.9672);transform-origin:0 0;">Noël</div><div style="position:absolute;left:524.50px;top:542.67px;z-index:6;font:normal 17.6px/20.22px 'Liberation Sans',sans-serif;color:#1c1c1c;white-space:pre;-webkit-text-stroke:0.15px #1c1c1c;transform:scaleX(1.0055);transform-origin:0 0;">Ouvert</div><div style="position:absolute;left:655.60px;top:542.67px;z-index:6;font:normal 17.6px/20.22px 'Liberation Sans',sans-serif;color:#1c1c1c;white-space:pre;-webkit-text-stroke:0.15px #1c1c1c;transform:scaleX(0.9424);transform-origin:0 0;">Action de Grâce</div><div style="position:absolute;left:1187.30px;top:542.67px;z-index:6;font:normal 17.6px/20.22px 'Liberation Sans',sans-serif;color:#1c1c1c;white-space:pre;-webkit-text-stroke:0.15px #1c1c1c;transform:scaleX(0.9742);transform-origin:0 0;">07:00</div><div style="position:absolute;left:1297.04px;top:542.67px;z-index:6;font:normal 17.6px/20.22px 'Liberation Sans',sans-serif;color:#1c1c1c;white-space:pre;-webkit-text-stroke:0.15px #1c1c1c;transform:scaleX(0.9643);transform-origin:0 0;">17:00</div><div style="position:absolute;left:523.56px;top:581.67px;z-index:6;font:normal 17.6px/20.22px 'Liberation Sans',sans-serif;color:#1c1c1c;white-space:pre;-webkit-text-stroke:0.15px #1c1c1c;transform:scaleX(0.9440);transform-origin:0 0;">Fermé</div><div style="position:absolute;left:654.64px;top:581.67px;z-index:6;font:normal 17.6px/20.22px 'Liberation Sans',sans-serif;color:#1c1c1c;white-space:pre;-webkit-text-stroke:0.15px #1c1c1c;transform:scaleX(0.9570);transform-origin:0 0;">Fête du Canada</div><div style="position:absolute;left:524.50px;top:620.67px;z-index:6;font:normal 17.6px/20.22px 'Liberation Sans',sans-serif;color:#1c1c1c;white-space:pre;-webkit-text-stroke:0.15px #1c1c1c;transform:scaleX(1.0055);transform-origin:0 0;">Ouvert</div><div style="position:absolute;left:654.62px;top:620.67px;z-index:6;font:normal 17.6px/20.22px 'Liberation Sans',sans-serif;color:#1c1c1c;white-space:pre;-webkit-text-stroke:0.15px #1c1c1c;transform:scaleX(0.9801);transform-origin:0 0;">Fête du Travail</div><div style="position:absolute;left:1187.30px;top:620.67px;z-index:6;font:normal 17.6px/20.22px 'Liberation Sans',sans-serif;color:#1c1c1c;white-space:pre;-webkit-text-stroke:0.15px #1c1c1c;transform:scaleX(0.9742);transform-origin:0 0;">07:00</div><div style="position:absolute;left:1297.04px;top:620.67px;z-index:6;font:normal 17.6px/20.22px 'Liberation Sans',sans-serif;color:#1c1c1c;white-space:pre;-webkit-text-stroke:0.15px #1c1c1c;transform:scaleX(0.9643);transform-origin:0 0;">17:00</div><div style="position:absolute;left:523.56px;top:659.67px;z-index:6;font:normal 17.6px/20.22px 'Liberation Sans',sans-serif;color:#1c1c1c;white-space:pre;-webkit-text-stroke:0.15px #1c1c1c;transform:scaleX(0.9440);transform-origin:0 0;">Fermé</div><div style="position:absolute;left:654.64px;top:659.67px;z-index:6;font:normal 17.6px/20.22px 'Liberation Sans',sans-serif;color:#1c1c1c;white-space:pre;-webkit-text-stroke:0.15px #1c1c1c;transform:scaleX(0.9590);transform-origin:0 0;">Fête nationale du Québec</div><div style="position:absolute;left:523.56px;top:698.67px;z-index:6;font:normal 17.6px/20.22px 'Liberation Sans',sans-serif;color:#1c1c1c;white-space:pre;-webkit-text-stroke:0.15px #1c1c1c;transform:scaleX(0.9440);transform-origin:0 0;">Fermé</div><div style="position:absolute;left:655.60px;top:698.67px;z-index:6;font:normal 17.6px/20.22px 'Liberation Sans',sans-serif;color:#1c1c1c;white-space:pre;-webkit-text-stroke:0.15px #1c1c1c;transform:scaleX(0.9562);transform-origin:0 0;">Jour de l&#x27;an</div><div style="position:absolute;left:524.50px;top:737.67px;z-index:6;font:normal 17.6px/20.22px 'Liberation Sans',sans-serif;color:#1c1c1c;white-space:pre;-webkit-text-stroke:0.15px #1c1c1c;transform:scaleX(1.0055);transform-origin:0 0;">Ouvert</div><div style="position:absolute;left:655.60px;top:737.67px;z-index:6;font:normal 17.6px/20.22px 'Liberation Sans',sans-serif;color:#1c1c1c;white-space:pre;-webkit-text-stroke:0.15px #1c1c1c;transform:scaleX(0.9645);transform-origin:0 0;">Journée des patriotes</div><div style="position:absolute;left:1187.30px;top:737.67px;z-index:6;font:normal 17.6px/20.22px 'Liberation Sans',sans-serif;color:#1c1c1c;white-space:pre;-webkit-text-stroke:0.15px #1c1c1c;transform:scaleX(0.9742);transform-origin:0 0;">07:00</div><div style="position:absolute;left:1297.04px;top:737.67px;z-index:6;font:normal 17.6px/20.22px 'Liberation Sans',sans-serif;color:#1c1c1c;white-space:pre;-webkit-text-stroke:0.15px #1c1c1c;transform:scaleX(0.9643);transform-origin:0 0;">17:00</div><div style="position:absolute;left:523.56px;top:776.67px;z-index:6;font:normal 17.6px/20.22px 'Liberation Sans',sans-serif;color:#1c1c1c;white-space:pre;-webkit-text-stroke:0.15px #1c1c1c;transform:scaleX(0.9440);transform-origin:0 0;">Fermé</div><div style="position:absolute;left:655.60px;top:776.67px;z-index:6;font:normal 17.6px/20.22px 'Liberation Sans',sans-serif;color:#1c1c1c;white-space:pre;-webkit-text-stroke:0.15px #1c1c1c;transform:scaleX(0.9532);transform-origin:0 0;">Vendredi saint</div>
<svg style="position:absolute;left:0;top:0;z-index:50" width="1599" height="1125" viewBox="0 0 1599 1125"><line x1="1008.0" y1="829.0" x2="592.9" y2="558.5" stroke="#1d4a6e" stroke-width="4"/><polygon points="582.8,551.9 598.1,554.1 591.0,565.0" fill="#1d4a6e"/><line x1="998.0" y1="839.0" x2="596.4" y2="630.4" stroke="#1d4a6e" stroke-width="4"/><polygon points="585.8,624.9 601.2,625.6 595.2,637.1" fill="#1d4a6e"/><line x1="995.0" y1="859.5" x2="607.4" y2="748.8" stroke="#1d4a6e" stroke-width="4"/><polygon points="595.9,745.5 611.1,743.1 607.6,755.6" fill="#1d4a6e"/><line x1="1024.0" y1="835.0" x2="1168.9" y2="574.1" stroke="#1d4a6e" stroke-width="4"/><polygon points="1174.7,563.6 1173.6,579.0 1162.2,572.7" fill="#1d4a6e"/><line x1="1031.0" y1="843.0" x2="1146.0" y2="655.3" stroke="#1d4a6e" stroke-width="4"/><polygon points="1152.3,645.1 1150.5,660.4 1139.4,653.6" fill="#1d4a6e"/><line x1="1036.0" y1="859.0" x2="1160.3" y2="765.2" stroke="#1d4a6e" stroke-width="4"/><polygon points="1169.9,758.0 1162.6,771.6 1154.8,761.2" fill="#1d4a6e"/><circle cx="360" cy="447" r="29" fill="#4194b6" stroke="#1d4a6e" stroke-width="3.9"/><polygon points="352.7,440.2 358.8,436.6 365.2,436.6 365.2,464.0 358.8,464.0 358.8,443.0 353.5,445.3" fill="#fff"/><circle cx="644" cy="439.3" r="29" fill="#4194b6" stroke="#1d4a6e" stroke-width="3.9"/><text x="644" y="455.8" font-family="Liberation Sans" font-weight="bold" font-size="37" fill="#fff" stroke="#fff" stroke-width="1.3" text-anchor="middle">2</text><circle cx="862" cy="505" r="29" fill="#4194b6" stroke="#1d4a6e" stroke-width="3.9"/><text x="862" y="521.5" font-family="Liberation Sans" font-weight="bold" font-size="37" fill="#fff" stroke="#fff" stroke-width="1.3" text-anchor="middle">3</text><circle cx="1014.5" cy="853" r="29" fill="#4194b6" stroke="#1d4a6e" stroke-width="3.9"/><text x="1014.5" y="869.5" font-family="Liberation Sans" font-weight="bold" font-size="37" fill="#fff" stroke="#fff" stroke-width="1.3" text-anchor="middle">4</text></svg>
</body></html>
